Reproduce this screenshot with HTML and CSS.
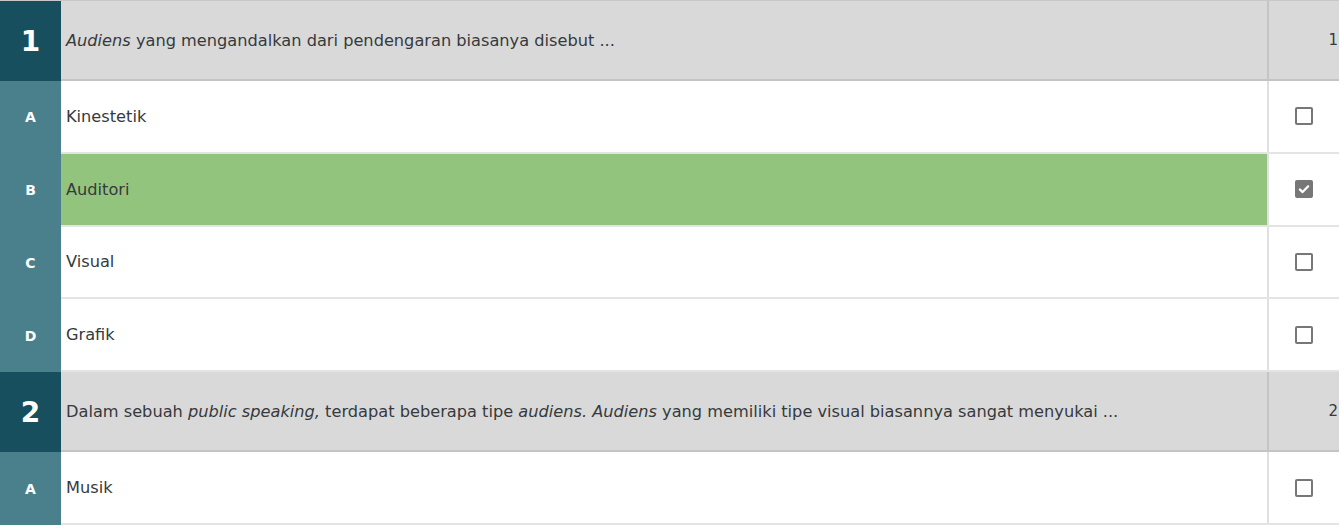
FILE: index.html
```html
<!DOCTYPE html>
<html lang="id">
<head>
<meta charset="utf-8">
<title>Soal</title>
<link rel="stylesheet" href="styles.css">
</head>
<body>
<div class="quiz">
  <div class="row q">
    <div class="num">1</div>
    <div class="text"><em>Audiens</em> yang mengandalkan dari pendengaran biasanya disebut ...</div>
    <div class="side">1</div>
  </div>
  <div class="row opt">
    <div class="letter">A</div>
    <div class="text">Kinestetik</div>
    <div class="side"><span class="cb"></span></div>
  </div>
  <div class="row opt correct">
    <div class="letter">B</div>
    <div class="text">Auditori</div>
    <div class="side"><span class="cb checked"><svg viewBox="0 0 16 16" width="16" height="16"><path d="M3.8 8.4l2.8 2.7L12.2 5.3" fill="none" stroke="#fff" stroke-width="2.2" stroke-linecap="round" stroke-linejoin="round"/></svg></span></div>
  </div>
  <div class="row opt">
    <div class="letter">C</div>
    <div class="text">Visual</div>
    <div class="side"><span class="cb"></span></div>
  </div>
  <div class="row opt">
    <div class="letter">D</div>
    <div class="text">Grafik</div>
    <div class="side"><span class="cb"></span></div>
  </div>
  <div class="row q">
    <div class="num">2</div>
    <div class="text">Dalam sebuah <em>public speaking,</em> terdapat beberapa tipe <em>audiens. Audiens</em> yang memiliki tipe visual biasannya sangat menyukai ...</div>
    <div class="side">2</div>
  </div>
  <div class="row opt">
    <div class="letter">A</div>
    <div class="text">Musik</div>
    <div class="side"><span class="cb"></span></div>
  </div>
</div>
</body>
</html>
```
FILE: styles.css
```css
html, body {
  margin: 0;
  padding: 0;
  background: #ffffff;
}
body {
  font-family: "DejaVu Sans", Verdana, sans-serif;
  font-size: 16.2px;
  color: #363a3d;
}
.quiz {
  width: 1339px;
  border-top: 1px solid #c8c8c8;
}
.row {
  display: flex;
  align-items: stretch;
}
.row.q {
  height: 78px;
  background: #d9d9d9;
  border-bottom: 2px solid #c4c4c4;
}
.row.opt {
  height: 70.8px;
  background: #ffffff;
  border-bottom: 2px solid #e4e4e4;
}
.row.opt.correct .text {
  background: #93c47d;
}
.num, .letter {
  width: 61px;
  flex: none;
  display: flex;
  align-items: center;
  justify-content: center;
  color: #ffffff;
  font-weight: bold;
}
.num {
  background: #174f5f;
  font-size: 28px;
  margin-bottom: -2px;
}
.letter {
  background: #4a7f8c;
  font-size: 14px;
  margin-bottom: -2px;
}
.text {
  flex: 1;
  display: flex;
  align-items: center;
  padding-left: 5px;
  white-space: pre;
}
.text em {
  font-style: italic;
}
.side {
  width: 70px;
  flex: none;
  border-left: 2px solid #e0e0e0;
  display: flex;
  align-items: center;
  justify-content: center;
}
.row.q .side {
  border-left-color: #c4c4c4;
  justify-content: flex-end;
  padding-right: 1px;
  width: 69px;
  font-size: 15px;
}
.cb {
  width: 14px;
  height: 14px;
  border: 2px solid #777777;
  border-radius: 2px;
  display: flex;
  align-items: center;
  justify-content: center;
}
.cb.checked {
  background: #777777;
}
.cb svg {
  width: 16px;
  height: 16px;
  flex: none;
}
```
